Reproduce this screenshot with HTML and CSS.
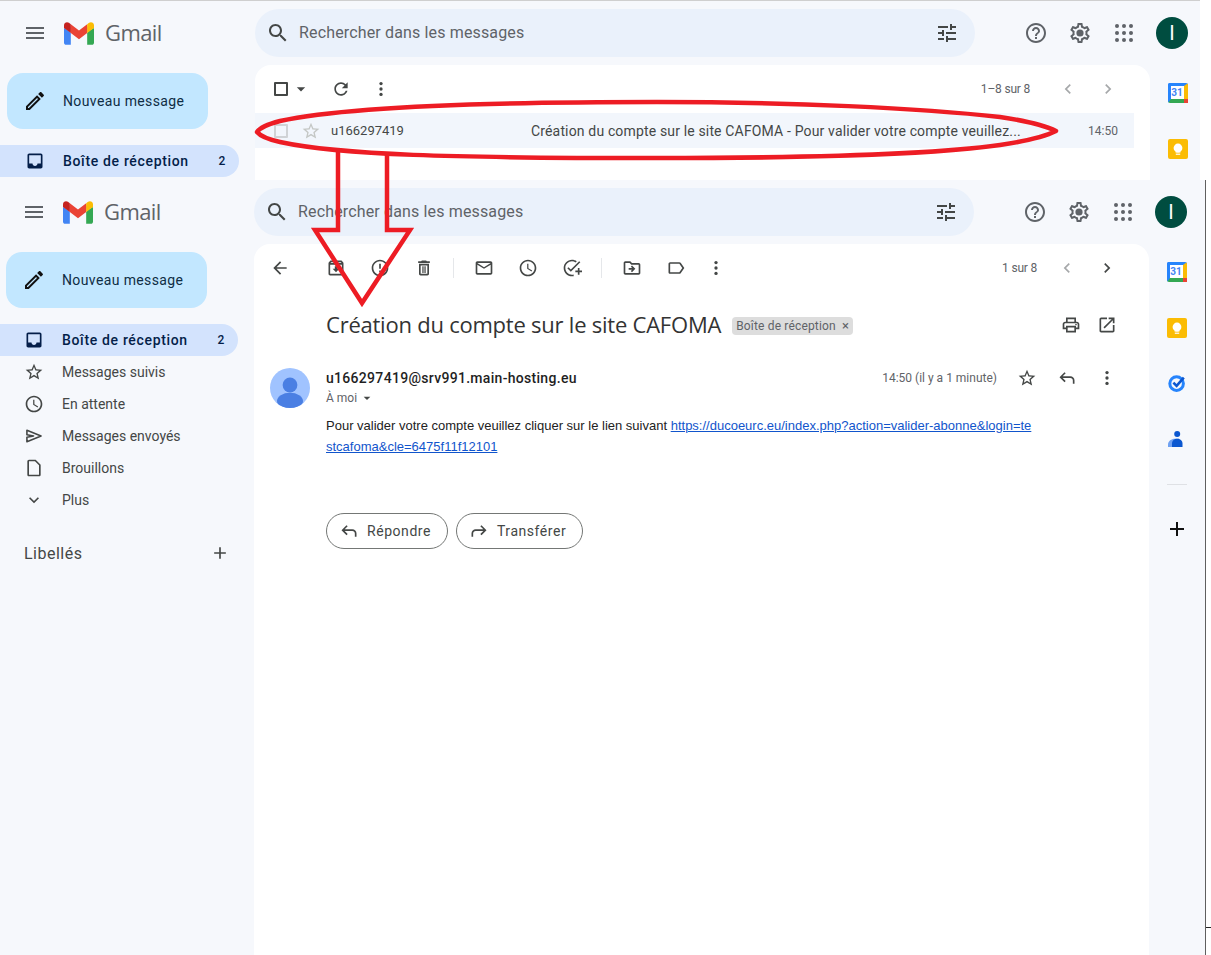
FILE: index.html
```html
<!DOCTYPE html>
<html lang="fr">
<head>
<meta charset="utf-8">
<title>Gmail</title>
<link rel="stylesheet" href="styles.css">
</head>
<body>
<svg class="defs" width="0" height="0" aria-hidden="true">
  <defs>
    <symbol id="i-menu" viewBox="0 0 24 24"><path d="M3 18h18v-2H3v2zm0-5h18v-2H3v2zm0-7v2h18V6H3z"/></symbol>
    <symbol id="i-search" viewBox="0 0 24 24"><path d="M15.5 14h-.79l-.28-.27C15.41 12.59 16 11.11 16 9.5 16 5.91 13.09 3 9.5 3S3 5.91 3 9.5 5.91 16 9.5 16c1.61 0 3.09-.59 4.23-1.57l.27.28v.79l5 4.99L20.49 19l-4.99-5zm-6 0C7.01 14 5 11.99 5 9.5S7.01 5 9.5 5 14 7.01 14 9.5 11.99 14 9.5 14z"/></symbol>
    <symbol id="i-tune" viewBox="0 0 24 24"><path d="M3 17v2h6v-2H3zM3 5v2h10V5H3zm10 16v-2h8v-2h-8v-2h-2v6h2zM7 9v2H3v2h4v2h2V9H7zm14 4v-2H11v2h10zm-6-4h2V7h4V5h-4V3h-2v6z"/></symbol>
    <symbol id="i-help" viewBox="0 0 24 24"><path d="M11 18h2v-2h-2v2zm1-16C6.48 2 2 6.48 2 12s4.48 10 10 10 10-4.48 10-10S17.52 2 12 2zm0 18c-4.41 0-8-3.59-8-8s3.59-8 8-8 8 3.59 8 8-3.59 8-8 8zm0-14c-2.21 0-4 1.79-4 4h2c0-1.1.9-2 2-2s2 .9 2 2c0 2-3 1.75-3 5h2c0-2.25 3-2.5 3-5 0-2.21-1.79-4-4-4z"/></symbol>
    <symbol id="i-gear" viewBox="0 0 24 24"><path d="M19.43 12.98c.04-.32.07-.64.07-.98 0-.34-.03-.66-.07-.98l2.11-1.65c.19-.15.24-.42.12-.64l-2-3.46c-.09-.16-.26-.25-.44-.25-.06 0-.12.01-.17.03l-2.49 1c-.52-.4-1.08-.73-1.69-.98l-.38-2.65C14.46 2.18 14.25 2 14 2h-4c-.25 0-.46.18-.49.42l-.38 2.65c-.61.25-1.17.59-1.69.98l-2.49-1c-.06-.02-.12-.03-.18-.03-.17 0-.34.09-.43.25l-2 3.46c-.13.22-.07.49.12.64l2.11 1.65c-.04.32-.07.65-.07.98 0 .33.03.66.07.98l-2.11 1.65c-.19.15-.24.42-.12.64l2 3.46c.09.16.26.25.44.25.06 0 .12-.01.17-.03l2.49-1c.52.4 1.08.73 1.69.98l.38 2.65c.03.24.24.42.49.42h4c.25 0 .46-.18.49-.42l.38-2.65c.61-.25 1.17-.59 1.69-.98l2.49 1c.06.02.12.03.18.03.17 0 .34-.09.43-.25l2-3.46c.12-.22.07-.49-.12-.64l-2.11-1.65zm-1.98-1.71c.04.31.05.52.05.73 0 .21-.02.43-.05.73l-.14 1.13.89.7 1.08.84-.7 1.21-1.27-.51-1.04-.42-.9.68c-.43.32-.84.56-1.25.73l-1.06.43-.16 1.13-.2 1.35h-1.4l-.19-1.35-.16-1.13-1.06-.43c-.43-.18-.83-.41-1.23-.71l-.91-.7-1.06.43-1.27.51-.7-1.21 1.08-.84.89-.7-.14-1.13c-.03-.31-.05-.54-.05-.74s.02-.43.05-.73l.14-1.13-.89-.7-1.08-.84.7-1.21 1.27.51 1.04.42.9-.68c.43-.32.84-.56 1.25-.73l1.06-.43.16-1.13.2-1.35h1.39l.19 1.35.16 1.13 1.06.43c.43.18.83.41 1.23.71l.91.7 1.06-.43 1.27-.51.7 1.21-1.07.85-.89.7.14 1.13z"/><circle cx="12" cy="12" r="3.6"/></symbol>
    <symbol id="i-apps" viewBox="0 0 24 24"><circle cx="5" cy="5" r="2"/><circle cx="12" cy="5" r="2"/><circle cx="19" cy="5" r="2"/><circle cx="5" cy="12" r="2"/><circle cx="12" cy="12" r="2"/><circle cx="19" cy="12" r="2"/><circle cx="5" cy="19" r="2"/><circle cx="12" cy="19" r="2"/><circle cx="19" cy="19" r="2"/></symbol>
    <symbol id="i-edit" viewBox="0 0 24 24"><path d="M3 17.25V21h3.75L17.81 9.94l-3.75-3.75L3 17.25zM5.92 19H5v-.92l9.06-9.06.92.92L5.92 19zM20.71 7.04c.39-.39.39-1.02 0-1.41l-2.34-2.34c-.2-.2-.45-.29-.71-.29s-.51.1-.7.29l-1.83 1.83 3.75 3.75 1.83-1.83z"/></symbol>
    <symbol id="i-inbox" viewBox="0 0 24 24"><path d="M19 3H5C3.9 3 3 3.9 3 5v14c0 1.1.9 2 2 2h14c1.1 0 2-.9 2-2V5c0-1.1-.9-2-2-2zm0 12h-4c0 1.66-1.35 3-3 3s-3-1.34-3-3H5V5h14v10z"/></symbol>
    <symbol id="i-star" viewBox="0 0 24 24"><path d="M22 9.24l-7.19-.62L12 2 9.19 8.63 2 9.24l5.46 4.73L5.82 21 12 17.27 18.18 21l-1.63-7.03L22 9.24zM12 15.4l-3.76 2.27 1-4.28-3.32-2.88 4.38-.38L12 6.1l1.71 4.04 4.38.38-3.32 2.88 1 4.28L12 15.4z"/></symbol>
    <symbol id="i-clock" viewBox="0 0 24 24"><path d="M11.99 2C6.47 2 2 6.48 2 12s4.47 10 9.99 10C17.52 22 22 17.52 22 12S17.52 2 11.99 2zM12 20c-4.42 0-8-3.58-8-8s3.58-8 8-8 8 3.58 8 8-3.58 8-8 8zm.5-13H11v6l5.25 3.15.75-1.23-4.5-2.67z"/></symbol>
    <symbol id="i-send" viewBox="0 0 24 24"><path d="M3.5 5.2L20.5 12 3.5 18.8v-5.3l8-1.5-8-1.5z" fill="none" stroke="#444746" stroke-width="1.9" stroke-linejoin="round"/></symbol>
    <symbol id="i-draft" viewBox="0 0 24 24"><path fill-rule="evenodd" d="M14 2H6c-1.1 0-2 .9-2 2v16c0 1.1.9 2 2 2h12c1.1 0 2-.9 2-2V8l-6-6zM6 20V4h7.17L18 8.83V20H6z"/></symbol>
    <symbol id="i-more" viewBox="0 0 24 24"><path d="M16.59 8.59L12 13.17 7.41 8.59 6 10l6 6 6-6z"/></symbol>
    <symbol id="i-add" viewBox="0 0 24 24"><path d="M19 13h-6v6h-2v-6H5v-2h6V5h2v6h6v2z"/></symbol>
    <symbol id="i-refresh" viewBox="0 0 24 24"><path d="M17.65 6.35C16.2 4.9 14.21 4 12 4c-4.42 0-7.99 3.58-7.99 8s3.57 8 7.99 8c3.73 0 6.84-2.55 7.73-6h-2.08c-.82 2.33-3.04 4-5.65 4-3.31 0-6-2.69-6-6s2.69-6 6-6c1.66 0 3.14.69 4.22 1.78L13 11h7V4l-2.35 2.35z"/></symbol>
    <symbol id="i-dots" viewBox="0 0 24 24"><circle cx="12" cy="5.5" r="2"/><circle cx="12" cy="12" r="2"/><circle cx="12" cy="18.5" r="2"/></symbol>
    <symbol id="i-left" viewBox="0 0 24 24"><path d="M15.41 7.41L14 6l-6 6 6 6 1.41-1.41L10.83 12z"/></symbol>
    <symbol id="i-right" viewBox="0 0 24 24"><path d="M10 6L8.59 7.41 13.17 12l-4.58 4.59L10 18l6-6z"/></symbol>
    <symbol id="i-caret" viewBox="0 0 24 24"><path d="M7 10l5 5 5-5z"/></symbol>
    <symbol id="i-back" viewBox="0 0 24 24"><path d="M20 11H7.83l5.59-5.59L12 4l-8 8 8 8 1.41-1.41L7.83 13H20v-2z"/></symbol>
    <symbol id="i-archive" viewBox="0 0 24 24"><path d="M20.54 5.23l-1.39-1.68C18.88 3.21 18.47 3 18 3H6c-.47 0-.88.21-1.16.55L3.46 5.23C3.17 5.57 3 6.02 3 6.5V19c0 1.1.9 2 2 2h14c1.1 0 2-.9 2-2V6.5c0-.48-.17-.93-.46-1.27zM6.24 5h11.52l.83 1H5.42l.82-1zM5 19V8h14v11H5zm8.45-9h-2.9v3H8l4 4 4-4h-2.55z"/></symbol>
    <symbol id="i-report" viewBox="0 0 24 24"><path d="M11 15h2v2h-2zm0-8h2v6h-2zm.99-5C6.47 2 2 6.48 2 12s4.47 10 9.99 10C17.52 22 22 17.52 22 12S17.52 2 11.99 2zM12 20c-4.42 0-8-3.58-8-8s3.58-8 8-8 8 3.58 8 8-3.58 8-8 8z"/></symbol>
    <symbol id="i-delete" viewBox="0 0 24 24"><path d="M16 9v10H8V9h8m-1.5-6h-5l-1 1H5v2h14V4h-3.5l-1-1zM18 7H6v12c0 1.1.9 2 2 2h8c1.1 0 2-.9 2-2V7z"/><path d="M10 10h1.5v8H10zM12.5 10H14v8h-1.5z"/></symbol>
    <symbol id="i-mail" viewBox="0 0 24 24"><path d="M20 4H4c-1.1 0-1.99.9-1.99 2L2 18c0 1.1.9 2 2 2h16c1.1 0 2-.9 2-2V6c0-1.1-.9-2-2-2zm0 14H4V8l8 5 8-5v10zm-8-7L4 6h16l-8 5z"/></symbol>
    <symbol id="i-task" viewBox="0 0 24 24"><path d="M22 5.18L10.59 16.6l-4.24-4.24 1.41-1.41 2.83 2.83 10-10L22 5.18z"/><path d="M12 20c-4.42 0-8-3.58-8-8s3.58-8 8-8c1.58 0 3.04.46 4.28 1.25l1.44-1.44C16.1 2.67 14.13 2 12 2 6.48 2 2 6.48 2 12s4.48 10 10 10c.7 0 1.38-.07 2-.2v-2.06c-.64.17-1.31.26-2 .26z"/><path d="M19 15h-3v2h3v3h2v-3h3v-2h-3v-3h-2v3z"/></symbol>
    <symbol id="i-move" viewBox="0 0 24 24"><path d="M20 6h-8l-2-2H4c-1.1 0-1.99.9-1.99 2L2 18c0 1.1.9 2 2 2h16c1.1 0 2-.9 2-2V8c0-1.1-.9-2-2-2zm0 12H4V6h5.17l2 2H20v10zm-8.01-9l-1.41 1.41L12.16 12H8v2h4.16l-1.59 1.59L11.99 17 16 13.01 11.99 9z"/></symbol>
    <symbol id="i-label" viewBox="0 0 24 24"><path d="M17.63 5.84C17.27 5.33 16.67 5 16 5L5 5.01C3.9 5.01 3 5.9 3 7v10c0 1.1.9 1.99 2 1.99L16 19c.67 0 1.27-.33 1.63-.84L22 12l-4.37-6.16zM16 17H5V7h11l3.55 5L16 17z"/></symbol>
    <symbol id="i-print" viewBox="0 0 24 24"><path d="M19 8h-1V3H6v5H5c-1.66 0-3 1.34-3 3v6h4v4h12v-4h4v-6c0-1.66-1.34-3-3-3zM8 5h8v3H8V5zm8 12v2H8v-4h8v2zm2-2v-2H6v2H4v-4c0-.55.45-1 1-1h14c.55 0 1 .45 1 1v4h-2z"/><circle cx="18" cy="11.5" r="1"/></symbol>
    <symbol id="i-open" viewBox="0 0 24 24"><path d="M19 19H5V5h7V3H5c-1.11 0-2 .9-2 2v14c0 1.1.89 2 2 2h14c1.1 0 2-.9 2-2v-7h-2v7zM14 3v2h3.59l-9.83 9.83 1.41 1.41L19 6.41V10h2V3h-7z"/></symbol>
    <symbol id="i-reply" viewBox="0 0 24 24"><path d="M19 19v-4q0-1.25-.875-2.125T16 12H6.825l3.6 3.6L9 17l-6-6 6-6 1.425 1.4-3.6 3.6H16q2.075 0 3.538 1.463T21 15v4h-2z"/></symbol>
    <symbol id="i-forward" viewBox="0 0 24 24"><path d="M5 19v-4q0-1.25.875-2.125T8 12h9.175l-3.6 3.6L15 17l6-6-6-6-1.425 1.4 3.6 3.6H8q-2.075 0-3.538 1.463T3 15v4h2z"/></symbol>
    <symbol id="logo-m" viewBox="0 0 256 193">
      <path fill="#4285F4" d="M58.182 192.05V93.14L27.507 65.077 0 49.504v125.091c0 9.658 7.825 17.455 17.455 17.455h40.727Z"/>
      <path fill="#34A853" d="M197.818 192.05h40.727c9.659 0 17.455-7.826 17.455-17.455V49.505l-31.156 17.837-27.026 25.798v98.91Z"/>
      <path fill="#EA4335" d="m58.182 93.14-4.174-38.647 4.174-36.989L128 69.868l69.818-52.364 4.669 34.992-4.669 40.644L128 145.504z"/>
      <path fill="#FBBC04" d="M197.818 17.504V93.14L256 49.504V26.231c0-21.585-24.64-33.89-41.89-20.945l-16.292 12.218Z"/>
      <path fill="#C5221F" d="m0 49.504 26.759 20.07L58.182 93.14V17.504L41.89 5.286C24.61-7.66 0 4.646 0 26.23v23.273Z"/>
    </symbol>
    <symbol id="app-keep" viewBox="0 0 20 20">
      <rect width="20" height="20" rx="2" fill="#fbbc04"/>
      <circle cx="10" cy="9" r="4.4" fill="#fff"/>
      <rect x="7.6" y="12" width="4.8" height="1.6" fill="#fff"/>
      <rect x="7.8" y="14.6" width="4.4" height="1.2" fill="#fff"/>
    </symbol>
    <symbol id="app-tasks" viewBox="0 0 20 20">
      <circle cx="9.6" cy="10.6" r="6.8" fill="none" stroke="#2684fc" stroke-width="3"/>
      <path d="M6.4 9.6l3.2 3.2 7.2-8.2" fill="none" stroke="#0b57d0" stroke-width="2.6"/>
    </symbol>
    <symbol id="app-contacts" viewBox="0 0 20 20">
      <circle cx="10.2" cy="5" r="3" fill="#0b57d0"/>
      <path d="M1 18v-2.4C1 12 4.4 9.8 8 9.8h4v8.2z" fill="#6fa1f2"/>
      <path d="M5 18v-3.4c0-2.8 2.4-4.8 5.2-4.8s5.3 2 5.3 4.8V18z" fill="#0b57d0"/>
    </symbol>
  </defs>
</svg>

<div class="window window-list">
  <header class="topbar">
    <div class="brand">
      <svg class="ico ico-24 brand-menu"><use href="#i-menu"/></svg>
      <svg class="logo"><use href="#logo-m"/></svg>
      <span class="wordmark">Gmail</span>
    </div>
    <div class="search">
      <svg class="ico ico-24"><use href="#i-search"/></svg>
      <span class="search-text">Rechercher dans les messages</span>
      <svg class="ico ico-24 search-tune"><use href="#i-tune"/></svg>
    </div>
    <div class="top-actions">
      <span class="top-btn"><svg class="ico ico-24"><use href="#i-help"/></svg></span>
      <span class="top-btn"><svg class="ico ico-24"><use href="#i-gear"/></svg></span>
      <span class="top-btn"><svg class="ico ico-24"><use href="#i-apps"/></svg></span>
      <span class="avatar">I</span>
    </div>
  </header>
  <aside class="sidebar">
    <div class="compose"><svg class="ico ico-24 compose-ico"><use href="#i-edit"/></svg><span>Nouveau message</span></div>
    <nav class="nav">
      <div class="nav-row active"><svg class="ico ico-20"><use href="#i-inbox"/></svg><span class="nav-label">Boîte de réception</span><span class="nav-count">2</span></div>
    </nav>
  </aside>
  <main class="panel panel-list">
    <div class="list-toolbar">
      <span class="check"></span>
      <svg class="ico ico-20 tb-caret"><use href="#i-caret"/></svg>
      <svg class="ico ico-20 tb-next"><use href="#i-refresh"/></svg>
      <svg class="ico ico-20 tb-next"><use href="#i-dots"/></svg>
      <div class="pager">
        <span class="pager-text pager-text-list">1–8 sur 8</span>
        <svg class="ico ico-20 dim"><use href="#i-left"/></svg>
        <svg class="ico ico-20 dim pager-next"><use href="#i-right"/></svg>
      </div>
    </div>
    <div class="mail-row">
      <span class="check check-light"></span>
      <svg class="ico ico-20 row-star"><use href="#i-star"/></svg>
      <span class="row-sender">u166297419</span>
      <span class="row-subject">Création du compte sur le site CAFOMA - Pour valider votre compte veuillez...</span>
      <span class="row-time">14:50</span>
    </div>
  </main>
  <aside class="rail">
    <div class="app-calendar"><span>31</span></div>
    <svg class="app app-gap"><use href="#app-keep"/></svg>
  </aside>
</div>

<div class="window window-read">
  <header class="topbar">
    <div class="brand">
      <svg class="ico ico-24 brand-menu"><use href="#i-menu"/></svg>
      <svg class="logo"><use href="#logo-m"/></svg>
      <span class="wordmark">Gmail</span>
    </div>
    <div class="search">
      <svg class="ico ico-24"><use href="#i-search"/></svg>
      <span class="search-text">Rechercher dans les messages</span>
      <svg class="ico ico-24 search-tune"><use href="#i-tune"/></svg>
    </div>
    <div class="top-actions">
      <span class="top-btn"><svg class="ico ico-24"><use href="#i-help"/></svg></span>
      <span class="top-btn"><svg class="ico ico-24"><use href="#i-gear"/></svg></span>
      <span class="top-btn"><svg class="ico ico-24"><use href="#i-apps"/></svg></span>
      <span class="avatar">I</span>
    </div>
  </header>
  <aside class="sidebar">
    <div class="compose"><svg class="ico ico-24 compose-ico"><use href="#i-edit"/></svg><span>Nouveau message</span></div>
    <nav class="nav">
      <div class="nav-row active"><svg class="ico ico-20"><use href="#i-inbox"/></svg><span class="nav-label">Boîte de réception</span><span class="nav-count">2</span></div>
      <div class="nav-row"><svg class="ico ico-20"><use href="#i-star"/></svg><span class="nav-label">Messages suivis</span></div>
      <div class="nav-row"><svg class="ico ico-20"><use href="#i-clock"/></svg><span class="nav-label">En attente</span></div>
      <div class="nav-row"><svg class="ico ico-20"><use href="#i-send"/></svg><span class="nav-label">Messages envoyés</span></div>
      <div class="nav-row"><svg class="ico ico-20"><use href="#i-draft"/></svg><span class="nav-label">Brouillons</span></div>
      <div class="nav-row"><svg class="ico ico-20"><use href="#i-more"/></svg><span class="nav-label">Plus</span></div>
    </nav>
    <div class="labels"><span>Libellés</span><svg class="ico ico-20"><use href="#i-add"/></svg></div>
  </aside>
  <main class="panel panel-read">
    <div class="read-toolbar">
      <span class="tb-btn"><svg class="ico ico-20"><use href="#i-back"/></svg></span>
      <span class="tb-btn tb-group"><svg class="ico ico-20"><use href="#i-archive"/></svg></span>
      <span class="tb-btn"><svg class="ico ico-20"><use href="#i-report"/></svg></span>
      <span class="tb-btn"><svg class="ico ico-20"><use href="#i-delete"/></svg></span>
      <span class="tb-sep"></span>
      <span class="tb-btn"><svg class="ico ico-20"><use href="#i-mail"/></svg></span>
      <span class="tb-btn"><svg class="ico ico-20"><use href="#i-clock"/></svg></span>
      <span class="tb-btn"><svg class="ico ico-20"><use href="#i-task"/></svg></span>
      <span class="tb-sep"></span>
      <span class="tb-btn"><svg class="ico ico-20"><use href="#i-move"/></svg></span>
      <span class="tb-btn"><svg class="ico ico-20"><use href="#i-label"/></svg></span>
      <span class="tb-btn tb-narrow"><svg class="ico ico-20"><use href="#i-dots"/></svg></span>
      <div class="pager">
        <span class="pager-text">1 sur 8</span>
        <svg class="ico ico-20 dim"><use href="#i-left"/></svg>
        <svg class="ico ico-20 pager-next"><use href="#i-right"/></svg>
      </div>
    </div>
    <div class="subject-row">
      <h1 class="subject">Création du compte sur le site CAFOMA</h1>
      <span class="tag">Boîte de réception <span class="tag-x">×</span></span>
      <svg class="ico ico-20 subject-print"><use href="#i-print"/></svg>
      <svg class="ico ico-20 subject-open"><use href="#i-open"/></svg>
    </div>
    <div class="message-head">
      <svg class="sender-pic" viewBox="0 0 40 40" aria-hidden="true">
        <defs><clipPath id="pic-clip"><circle cx="20" cy="20" r="20"/></clipPath></defs>
        <g clip-path="url(#pic-clip)">
          <rect width="40" height="40" fill="#a0c3ff"/>
          <circle cx="20" cy="17" r="7.4" fill="#4a7fe3"/>
          <ellipse cx="20" cy="33" rx="13" ry="8.2" fill="#4a7fe3"/>
        </g>
      </svg>
      <div class="sender-col">
        <div class="sender-name">u166297419@srv991.main-hosting.eu</div>
        <div class="sender-to">À moi <svg class="ico ico-16"><use href="#i-caret"/></svg></div>
      </div>
      <span class="msg-time">14:50 (il y a 1 minute)</span>
      <svg class="ico ico-20 msg-act"><use href="#i-star"/></svg>
      <svg class="ico ico-20 msg-act"><use href="#i-reply"/></svg>
      <svg class="ico ico-20 msg-act"><use href="#i-dots"/></svg>
    </div>
    <p class="msg-body">Pour valider votre compte veuillez cliquer sur le lien suivant <a class="msg-link" href="#">https://ducoeurc.eu/index.php?action=valider-abonne&amp;login=testcafoma&amp;cle=6475f11f12101</a></p>
    <div class="msg-actions">
      <span class="pill"><svg class="ico ico-20"><use href="#i-reply"/></svg>Répondre</span>
      <span class="pill"><svg class="ico ico-20"><use href="#i-forward"/></svg>Transférer</span>
    </div>
  </main>
  <aside class="rail">
    <div class="app-calendar"><span>31</span></div>
    <svg class="app app-gap"><use href="#app-keep"/></svg>
    <svg class="app app-gap-s"><use href="#app-tasks"/></svg>
    <svg class="app app-gap"><use href="#app-contacts"/></svg>
    <span class="rail-sep"></span>
    <svg class="ico ico-24 rail-add"><use href="#i-add"/></svg>
  </aside>
</div>

<svg class="annotation" width="1211" height="955" viewBox="0 0 1211 955" aria-hidden="true">
  <path class="mark" d="M257 132Q261 126 280 121C330 110 450 102 657 102C790 102 920 108 1000 117Q1040 123 1056 131Q1040 139 1000 145C920 156 790 158 657 158C450 158 340 155 280 142Q262 138 257 132Z"/>
  <polyline class="mark" points="338,152 338,230 315,230 362,303 410,230 387,230 387,152"/>
  <path class="tick" d="M1206 927.5h5"/>
</svg>
</body>
</html>
```

FILE: styles.css
```css
* { box-sizing: border-box; }
html, body { margin: 0; padding: 0; }
body {
  position: relative;
  width: 1211px;
  height: 955px;
  overflow: hidden;
  background: #fff;
  font-family: Roboto, "Liberation Sans", sans-serif;
  color: #444746;
}
.defs { position: absolute; }

.ico { display: block; flex: none; fill: #444746; }
.ico-24 { width: 24px; height: 24px; }
.ico-20 { width: 20px; height: 20px; }
.ico-16 { width: 16px; height: 16px; }
.dim { fill: #a6a8aa; }

.window {
  display: grid;
  grid-template-columns: 255px 895px 56px;
  grid-template-rows: 64px 1fr;
  background: #f6f8fc;
  overflow: hidden;
}
.window-list {
  width: 1200px;
  height: 180px;
  border-top: 1px solid #cfcfcf;
}
.window-read {
  width: 1207px;
  height: 775px;
  margin-left: -1px;
  border-right: 1px solid #5f5f5f;
}

/* Top bar */
.topbar {
  grid-column: 1 / -1;
  display: flex;
  align-items: center;
}
.brand {
  width: 255px;
  display: flex;
  align-items: center;
  padding-left: 23px;
}
.brand-menu { fill: #5f6368; }
.logo { width: 30px; height: 23px; margin-left: 17px; }
.wordmark {
  margin: 0 0 2px 11px;
  font-family: "Open Sans", sans-serif;
  font-size: 22px;
  color: #5f6368;
  letter-spacing: -0.6px;
}
.search {
  width: 720px;
  height: 48px;
  border-radius: 24px;
  background: #eaf1fb;
  display: flex;
  align-items: center;
  padding: 0 16px 0 11px;
}
.search-text {
  margin: 0 0 2px 9px;
  font-size: 16px;
  letter-spacing: 0.15px;
  color: #5f6368;
}
.search-tune { margin-left: auto; }
.top-actions { display: flex; align-items: center; margin-left: 39px; }
.top-btn { width: 44px; display: flex; justify-content: center; }
.top-btn .ico { fill: #5f6368; }
.avatar {
  width: 32px;
  height: 32px;
  margin-left: 10px;
  border-radius: 50%;
  background: #004d40;
  color: #fff;
  font-size: 20px;
  line-height: 32px;
  text-align: center;
}

/* Sidebar */
.sidebar { padding-top: 8px; }
.compose {
  width: 201px;
  height: 56px;
  margin-left: 7px;
  border-radius: 16px;
  background: #c2e7ff;
  display: flex;
  align-items: center;
  padding-left: 16px;
  font-size: 14px;
  color: #0f2d44;
  letter-spacing: 0.38px;
}
.compose-ico { fill: #111; margin-right: 16px; }
.nav { margin-top: 16px; }
.nav-row {
  width: 239px;
  height: 32px;
  display: flex;
  align-items: center;
  padding: 0 13px 0 25px;
  border-radius: 0 16px 16px 0;
  font-size: 14px;
  color: #444746;
}
.nav-label { margin-left: 18px; }
.nav-row.active {
  background: #d3e3fd;
  color: #041e49;
  font-weight: 500;
  letter-spacing: 0.66px;
}
.nav-row.active .ico { fill: #041e49; }
.nav-count { margin-left: auto; font-size: 12px; }
.labels {
  display: flex;
  align-items: center;
  justify-content: space-between;
  width: 231px;
  height: 32px;
  margin-top: 21px;
  padding-left: 25px;
  font-size: 16px;
  letter-spacing: 0.5px;
  color: #444746;
}

/* Panels */
.panel { background: #fff; border-radius: 16px 16px 0 0; }
.list-toolbar {
  height: 48px;
  display: flex;
  align-items: center;
  padding: 0 32px 0 19px;
}
.check {
  width: 14px;
  height: 14px;
  flex: none;
  border: 2px solid #444746;
  border-radius: 1px;
}
.check-light { border-color: #d0d3d6; }
.tb-caret { margin-left: 3px; }
.tb-next { margin-left: 20px; }
.pager { margin-left: auto; display: flex; align-items: center; }
.pager-text { font-size: 12px; color: #5f6368; margin-right: 20px; letter-spacing: -0.2px; }
.pager-text-list { margin-right: 28px; }
.pager-next { margin-left: 20px; }

.mail-row {
  width: 879px;
  height: 35px;
  display: flex;
  align-items: center;
  padding: 0 16px 0 19px;
  background: #f2f6fc;
  font-size: 14px;
  color: #444746;
}
.row-star { margin-left: 13px; fill: #c4c7c5; }
.row-sender { margin-left: 10px; width: 200px; flex: none; font-size: 13px; }
.row-subject { flex: 1; white-space: nowrap; overflow: hidden; letter-spacing: 0.155px; }
.row-time { font-size: 12px; color: #5f6368; }

.read-toolbar {
  height: 48px;
  display: flex;
  align-items: center;
  padding: 0 32px 0 4px;
}
.tb-btn { width: 44px; display: flex; justify-content: center; flex: none; }
.tb-group { margin-left: 12px; }
.tb-narrow { width: 36px; }
.tb-sep { width: 1px; height: 20px; margin: 0 8px 0 7px; background: #e5e7ea; flex: none; }

.subject-row {
  height: 42px;
  margin-top: 12px;
  display: flex;
  align-items: center;
  padding: 0 32px 0 72px;
}
.subject {
  margin: 0 0 2px;
  font-family: "Open Sans", sans-serif;
  font-size: 22px;
  font-weight: 400;
  color: #333;
  letter-spacing: -0.23px;
}
.tag {
  margin: 2px 0 0 11px;
  height: 18px;
  padding: 0 4px;
  border-radius: 4px;
  background: #dddddd;
  font-size: 12px;
  letter-spacing: 0.17px;
  line-height: 18px;
  color: #5f6368;
}
.tag-x { font-size: 13px; margin-left: 3px; }
.subject-print { margin-left: auto; }
.subject-open { margin-left: 16px; }

.message-head {
  height: 40px;
  margin-top: 22px;
  display: flex;
  padding: 0 32px 0 16px;
}
.sender-pic { width: 40px; height: 40px; flex: none; }
.sender-col { margin-left: 16px; }
.sender-name {
  height: 20px;
  font-size: 14px;
  font-weight: 500;
  letter-spacing: 0.3px;
  line-height: 20px;
  color: #1f1f1f;
}
.sender-to {
  height: 20px;
  display: flex;
  align-items: center;
  gap: 2px;
  font-size: 12px;
  color: #5f6368;
}
.msg-time { margin-left: auto; font-size: 12px; line-height: 20px; color: #5f6368; }
.msg-act { margin-left: 20px; }
.msg-body {
  width: 708px;
  margin: 7px 0 0 72px;
  font-family: "Liberation Sans", Arial, sans-serif;
  font-size: 13px;
  line-height: 21px;
  color: #222;
  word-break: break-all;
}
.msg-link { color: #1155cc; }
.msg-actions { display: flex; gap: 8px; margin: 56px 0 0 72px; }
.pill {
  height: 36px;
  display: flex;
  align-items: center;
  gap: 8px;
  padding: 0 16px 0 12px;
  border: 1px solid #747775;
  border-radius: 18px;
  font-size: 14px;
  letter-spacing: 0.55px;
  color: #444746;
}

/* Right rail */
.rail { display: flex; flex-direction: column; align-items: center; padding: 18px 1px 0 0; }
.app { display: block; width: 20px; height: 20px; flex: none; }
.app-gap { margin-top: 36px; }
.app-gap-s { margin-top: 35px; }
.app-calendar {
  position: relative;
  width: 20px;
  height: 20px;
  flex: none;
  border: solid;
  border-width: 3px 4px 4px 3px;
  border-color: #2684fc #fbbc04 #34a853 #2684fc;
  border-radius: 2px;
  background: #fff;
  font-size: 10px;
  font-weight: 700;
  line-height: 13px;
  text-align: center;
  color: #4285f4;
}
.app-calendar::after {
  content: "";
  position: absolute;
  right: -4px;
  bottom: -4px;
  border-style: solid;
  border-width: 0 0 4px 4px;
  border-color: transparent transparent #ea4335 #ea4335;
}
.rail-sep { width: 20px; height: 1px; margin-top: 35px; background: #dfe1e5; flex: none; }
.rail-add { margin-top: 32px; fill: #111; }

/* Hand-drawn red annotation laid over the two screenshots */
.annotation { position: absolute; left: 0; top: 0; pointer-events: none; }
.mark { fill: none; stroke: #ed1c24; stroke-width: 4.5; stroke-linejoin: round; }
polyline.mark { stroke-linejoin: miter; }
.tick { stroke: #222; stroke-width: 1; fill: none; }
```
